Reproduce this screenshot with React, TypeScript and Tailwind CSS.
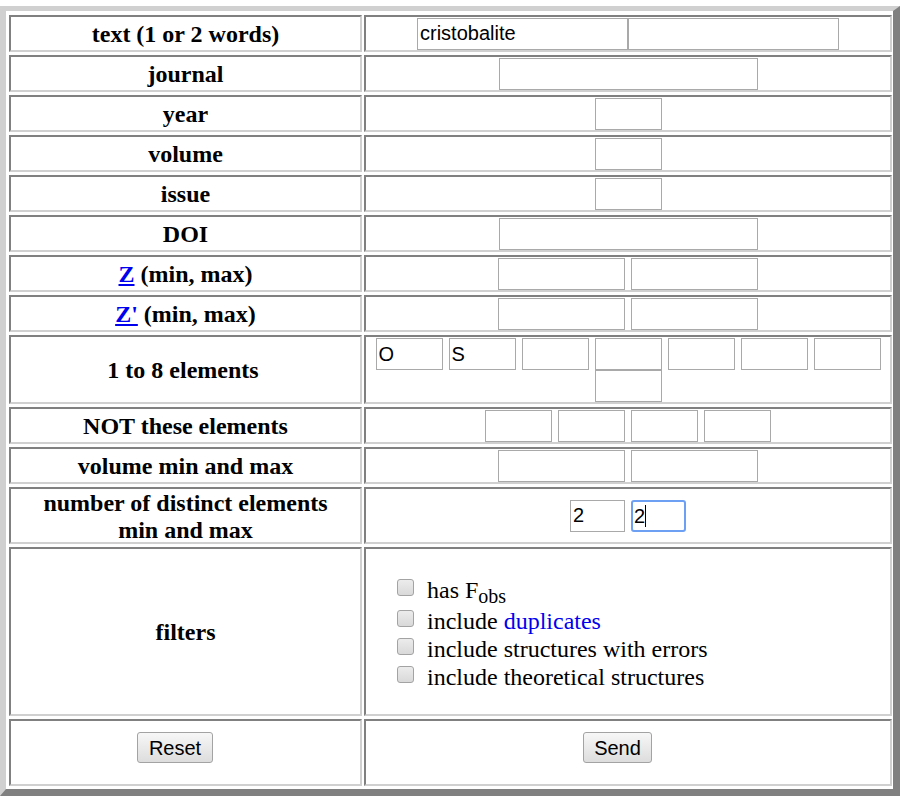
import React from "react";

const cellBase =
  "border-2 border-t-[#808080] border-l-[#808080] border-r-[#d0d0d0] border-b-[#d0d0d0] bg-white";
const labelCell =
  cellBase +
  " flex items-center justify-center pt-[2px] text-center font-bold text-[24px] leading-[27px] text-black font-['Liberation_Serif',serif]";
const inputCell = cellBase + " flex items-center justify-center";

function Box({ w, value = "" }: { w: string; value?: string }) {
  return (
    <input
      type="text"
      defaultValue={value}
      className={`${w} h-[32px] shrink-0 border border-[#a9a9a9] bg-white px-[2px] text-[20px] text-black font-['Liberation_Sans',sans-serif] outline-none`}
    />
  );
}

function Check({ children }: { children: React.ReactNode }) {
  return (
    <div className="flex h-[28px] items-start">
      <input
        type="checkbox"
        className="mr-[13px] mt-[3px] h-[17px] w-[17px] shrink-0 appearance-none rounded-[3px] border border-[#a3a3a3] bg-linear-to-b from-[#ececec] to-[#d9d9d9]"
      />
      <span className="text-[24px] leading-[28px] text-black font-['Liberation_Serif',serif] whitespace-nowrap">
        {children}
      </span>
    </div>
  );
}

function Btn({ label, w }: { label: string; w: string }) {
  return (
    <button
      type="button"
      className={`${w} mr-[21px] h-[31px] rounded-[3px] border border-[#a3a3a3] bg-linear-to-b from-[#f7f7f7] to-[#dddddd] text-[20px] leading-none text-black font-['Liberation_Sans',sans-serif]`}
    >
      {label}
    </button>
  );
}

export default function App() {
  return (
    <div className="h-[796px] w-[900px] bg-white pt-[6px]">
      <div className="h-[790px] border-t-[5px] border-l-[6px] border-r-[7px] border-b-[7px] border-t-[#d0d0d0] border-l-[#d0d0d0] border-r-[#808080] border-b-[#808080] pt-[4px] pl-[3px] pr-[1px] pb-[3px]">
        <div className="grid grid-cols-[353px_528px] gap-x-[2px] gap-y-[3px]">
          {/* text */}
          <div className={labelCell + " h-[37px]"}>text (1 or 2 words)</div>
          <div className={inputCell + " h-[37px]"}>
            <Box w="w-[211px]" value="cristobalite" />
            <Box w="w-[211px]" />
          </div>

          {/* journal */}
          <div className={labelCell + " h-[37px]"}>journal</div>
          <div className={inputCell + " h-[37px]"}>
            <Box w="w-[259px]" />
          </div>

          {/* year */}
          <div className={labelCell + " h-[37px]"}>year</div>
          <div className={inputCell + " h-[37px]"}>
            <Box w="w-[67px]" />
          </div>

          {/* volume */}
          <div className={labelCell + " h-[37px]"}>volume</div>
          <div className={inputCell + " h-[37px]"}>
            <Box w="w-[67px]" />
          </div>

          {/* issue */}
          <div className={labelCell + " h-[37px]"}>issue</div>
          <div className={inputCell + " h-[37px]"}>
            <Box w="w-[67px]" />
          </div>

          {/* DOI */}
          <div className={labelCell + " h-[37px]"}>DOI</div>
          <div className={inputCell + " h-[37px]"}>
            <Box w="w-[259px]" />
          </div>

          {/* Z */}
          <div className={labelCell + " h-[37px]"}>
            <span>
              <a href="#" className="text-[#0000ee] underline">
                Z
              </a>{" "}
              (min, max)
            </span>
          </div>
          <div className={inputCell + " h-[37px] gap-[6px]"}>
            <Box w="w-[127px]" />
            <Box w="w-[127px]" />
          </div>

          {/* Z' */}
          <div className={labelCell + " h-[37px]"}>
            <span>
              <a href="#" className="text-[#0000ee] underline">
                Z'
              </a>{" "}
              (min, max)
            </span>
          </div>
          <div className={inputCell + " h-[37px] gap-[6px]"}>
            <Box w="w-[127px]" />
            <Box w="w-[127px]" />
          </div>

          {/* elements */}
          <div className={labelCell + " h-[69px] pr-[5px]"}>1 to 8 elements</div>
          <div className={cellBase + " h-[69px] pt-[1px]"}>
            <div className="flex flex-wrap justify-center gap-x-[6px]">
              <Box w="w-[67px]" value="O" />
              <Box w="w-[67px]" value="S" />
              <Box w="w-[67px]" />
              <Box w="w-[67px]" />
              <Box w="w-[67px]" />
              <Box w="w-[67px]" />
              <Box w="w-[67px]" />
              <Box w="w-[67px]" />
            </div>
          </div>

          {/* NOT */}
          <div className={labelCell + " h-[37px]"}>NOT these elements</div>
          <div className={inputCell + " h-[37px] gap-[6px]"}>
            <Box w="w-[67px]" />
            <Box w="w-[67px]" />
            <Box w="w-[67px]" />
            <Box w="w-[67px]" />
          </div>

          {/* volume min max */}
          <div className={labelCell + " h-[37px]"}>volume min and max</div>
          <div className={inputCell + " h-[37px] gap-[6px]"}>
            <Box w="w-[127px]" />
            <Box w="w-[127px]" />
          </div>

          {/* distinct */}
          <div className={labelCell + " h-[57px]"}>
            <span>
              number of distinct elements
              <br />
              min and max
            </span>
          </div>
          <div className={inputCell + " h-[57px] gap-[6px]"}>
            <Box w="w-[55px]" value="2" />
            <div className="flex h-[32px] w-[55px] items-center rounded-[3px] border-2 border-[#6d9ff2] bg-white px-[1px] text-[20px] text-black font-['Liberation_Sans',sans-serif]">
              <span>2</span>
              <span className="h-[22px] w-px bg-black" />
            </div>
          </div>

          {/* filters */}
          <div className={labelCell + " h-[169px]"}>filters</div>
          <div className={cellBase + " flex h-[169px] flex-col pl-[31px] pt-[27px]"}>
            <Check>
              has F<sub className="text-[20px]">obs</sub>
            </Check>
            <div className="mt-[3px]">
              <Check>
                include <span className="text-[#0000ee]">duplicates</span>
              </Check>
            </div>
            <Check>include structures with errors</Check>
            <Check>include theoretical structures</Check>
          </div>

          {/* buttons */}
          <div className={cellBase + " flex h-[67px] items-start justify-center pt-[11px]"}>
            <Btn label="Reset" w="w-[76px]" />
          </div>
          <div className={cellBase + " flex h-[67px] items-start justify-center pt-[11px]"}>
            <Btn label="Send" w="w-[69px]" />
          </div>
        </div>
      </div>
    </div>
  );
}
